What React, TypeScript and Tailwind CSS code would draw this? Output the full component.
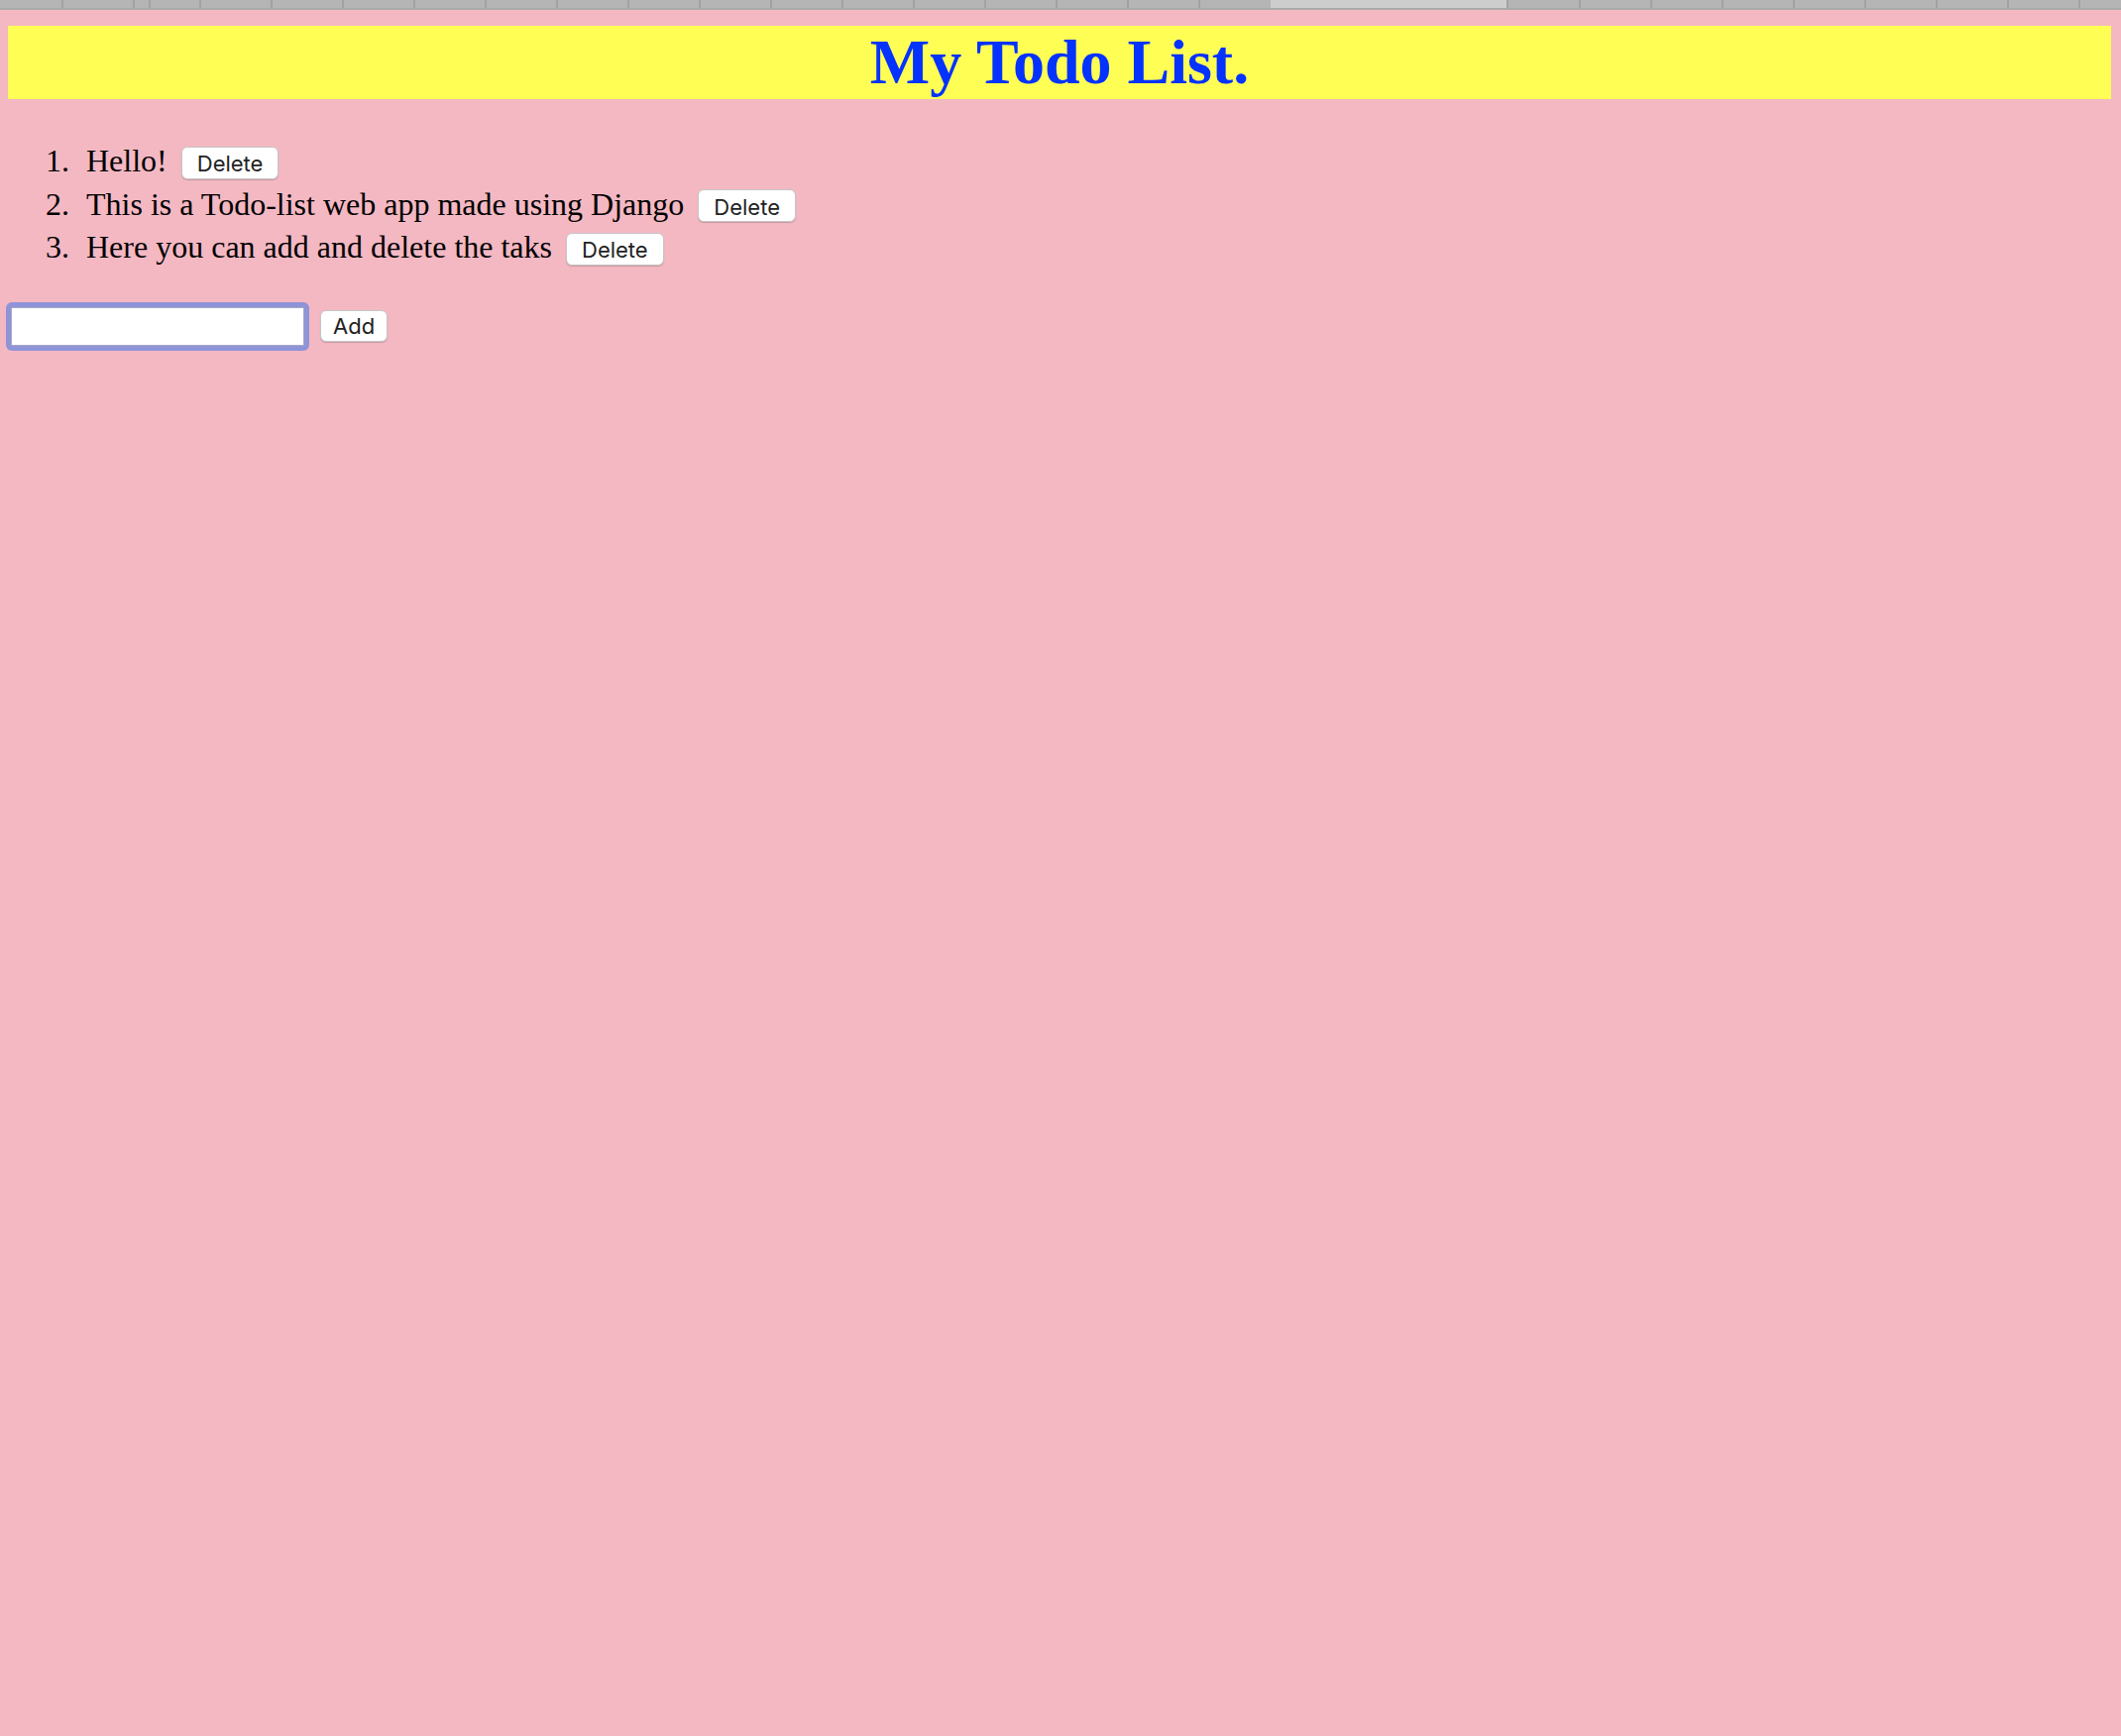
import { useState } from "react";

const tabs = [
  { w: "w-[62px]", edge: false, active: false },
  { w: "w-[72px]", edge: true, active: false },
  { w: "w-[16px]", edge: true, active: false },
  { w: "w-[51px]", edge: true, active: false },
  { w: "w-[72px]", edge: true, active: false },
  { w: "w-[72px]", edge: true, active: false },
  { w: "w-[72px]", edge: true, active: false },
  { w: "w-[72px]", edge: true, active: false },
  { w: "w-[72px]", edge: true, active: false },
  { w: "w-[72px]", edge: true, active: false },
  { w: "w-[72px]", edge: true, active: false },
  { w: "w-[72px]", edge: true, active: false },
  { w: "w-[72px]", edge: true, active: false },
  { w: "w-[72px]", edge: true, active: false },
  { w: "w-[72px]", edge: true, active: false },
  { w: "w-[72px]", edge: true, active: false },
  { w: "w-[72px]", edge: true, active: false },
  { w: "w-[72px]", edge: true, active: false },
  { w: "w-[73px]", edge: true, active: false },
  { w: "w-[238px]", edge: false, active: true },
  { w: "w-[73px]", edge: true, active: false },
  { w: "w-[72px]", edge: true, active: false },
  { w: "w-[72px]", edge: true, active: false },
  { w: "w-[72px]", edge: true, active: false },
  { w: "w-[72px]", edge: true, active: false },
  { w: "w-[72px]", edge: true, active: false },
  { w: "w-[72px]", edge: true, active: false },
  { w: "w-[72px]", edge: true, active: false },
  { w: "w-[43px]", edge: true, active: false },
];

const btn =
  "h-[33px] flex items-center bg-white border border-[#c6c6c6] rounded-[6px] shadow-[0_1px_1px_rgba(0,0,0,0.18)] text-[22px] text-[#222] font-['Inter','Liberation_Sans',sans-serif]";

export default function App() {
  const [todos, setTodos] = useState([
    "Hello!",
    "This is a Todo-list web app made using Django",
    "Here you can add and delete the taks",
  ]);
  const [text, setText] = useState("");

  return (
    <div className="min-h-[1752px] w-[2140px] bg-[#f4b8c3] font-['Liberation_Serif','Times_New_Roman',serif]">
      <div className="flex h-[10px] bg-[#b5b5b5] border-b-2 border-[#aaaaaa] overflow-hidden">
        {tabs.map((t, i) => (
          <div
            key={i}
            className={`${t.w} shrink-0 h-[8px] ${t.edge ? "border-l-2 border-[#a2a2a2]" : ""} ${t.active ? "bg-[#cdcdcd]" : ""}`}
          />
        ))}
      </div>

      <h1 className="mt-[16px] ml-[8px] mr-[10px] h-[74px] bg-[#fffe55] text-center text-[64px] leading-[74px] font-bold text-[#0432ff]">
        My Todo List.
      </h1>

      <ol className="mt-[38px] pl-[46px]">
        {todos.map((todo, i) => (
          <li key={i} className="flex items-baseline h-[43.5px] text-[32px] text-black">
            <span className="w-[41px] shrink-0">{i + 1}.</span>
            <span>{todo}</span>
            <button
              className={`${btn} px-[15px] pt-[3px] ml-[14px]`}
              onClick={() => setTodos(todos.filter((_, j) => j !== i))}
            >
              Delete
            </button>
          </li>
        ))}
      </ol>

      <div className="mt-[36px] ml-[6px] flex items-center gap-[11px]">
        <div className="w-[306px] h-[49px] rounded-[6px] bg-[#8f93d8] p-[5px]">
          <input
            value={text}
            onChange={(e) => setText(e.target.value)}
            className="w-full h-full bg-white border border-[#a6a8c4] outline-none text-[26px] px-2"
          />
        </div>
        <button
          className={`${btn} !h-[32px] px-[12px]`}
          onClick={() => {
            if (text.trim()) {
              setTodos([...todos, text]);
              setText("");
            }
          }}
        >
          Add
        </button>
      </div>
    </div>
  );
}
